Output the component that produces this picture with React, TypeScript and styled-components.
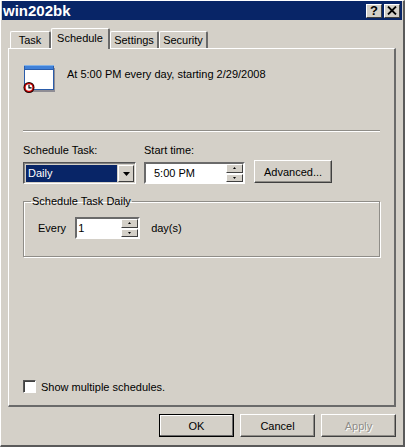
import React from 'react'
import styled, { createGlobalStyle } from 'styled-components'

const Global = createGlobalStyle`
  html, body { margin: 0; padding: 0; background: #d4d0c8; }
  * { box-sizing: border-box; }
`

const Dialog = styled.div`
  width: 405px;
  height: 447px;
  padding: 0 1px 2px 1px;
  background: #d4d0c8;
  display: flex;
  flex-direction: column;
  font-family: "Liberation Sans", Arial, sans-serif;
  font-size: 11px;
  color: #000;
  border-top: 1px solid #fff;
  border-left: 1px solid #fff;
  border-right: 2px solid #5a5a5a;
  border-bottom: 2px solid #5a5a5a;
`

const TitleBar = styled.div`
  height: 19px;
  flex: none;
  background: #082567;
  color: #fff;
  font-weight: bold;
  font-size: 15px;
  display: flex;
  align-items: center;
  justify-content: space-between;
  padding: 0 2px 0 1px;
`

const TitleButtons = styled.div`
  display: flex;
  gap: 2px;
`

const TitleButton = styled.div`
  width: 16px;
  height: 14px;
  background: #d4d0c8;
  color: #000;
  font-size: 13px;
  font-weight: bold;
  display: flex;
  align-items: center;
  justify-content: center;
  border: 1px solid;
  border-color: #fff #404040 #404040 #fff;
`

const Body = styled.div`
  flex: 1;
  display: flex;
  flex-direction: column;
  padding: 8px 6px 0 6px;
`

const TabRow = styled.div`
  display: flex;
  align-items: flex-end;
  height: 20px;
  padding-left: 2px;
  position: relative;
  z-index: 1;
`

const Tab = styled.div<{ $active?: boolean; $width: number }>`
  width: ${p => p.$width}px;
  height: ${p => (p.$active ? 21 : 17)}px;
  margin-bottom: ${p => (p.$active ? -1 : 0)}px;
  background: #d4d0c8;
  border-top: 1px solid #fff;
  border-left: 1px solid #fff;
  border-right: 2px solid #6a6a6a;
  border-radius: 2px 2px 0 0;
  display: flex;
  align-items: center;
  justify-content: center;
  padding-bottom: ${p => (p.$active ? 2 : 0)}px;
`

const Panel = styled.div`
  height: 359px;
  flex: none;
  border-top: 1px solid #fff;
  border-left: 1px solid #fff;
  border-right: 2px solid #6a6a6a;
  border-bottom: 2px solid #6a6a6a;
  padding: 16px 14px 0 14px;
  display: flex;
  flex-direction: column;
`

const Summary = styled.div`
  display: flex;
  align-items: flex-start;
  gap: 12px;
  height: 29px;
`

const SummaryText = styled.div`
  line-height: 13px;
  margin-top: 3px;
`

const Divider = styled.div`
  height: 2px;
  margin-top: 36px;
  background: #8f8d88;
  border-bottom: 1px solid #fff;
`

const Controls = styled.div`
  display: flex;
  align-items: flex-end;
  margin-top: 12px;
`

const Field = styled.div<{ $width: number }>`
  width: ${p => p.$width}px;
  display: flex;
  flex-direction: column;
  gap: 6px;
`

const Combo = styled.div`
  width: 113px;
  height: 22px;
  background: #d4d0c8;
  border: 1px solid;
  border-color: #555 #fff #fff #555;
  box-shadow: inset 1px 1px 0 #808080;
  padding: 2px 1px 1px 2px;
  display: flex;
  gap: 1px;
`

const ComboValue = styled.div`
  flex: 1;
  background: #082567;
  color: #fff;
  padding-left: 2px;
  line-height: 16px;
`

const ComboArrow = styled.div`
  width: 16px;
  background: #d4d0c8;
  border: 1px solid;
  border-color: #fff #404040 #404040 #fff;
  display: flex;
  align-items: center;
  justify-content: center;
`

const SpinInput = styled.div<{ $width: number; $indent: number }>`
  width: ${p => p.$width}px;
  height: 22px;
  background: #fff;
  border: 2px solid;
  border-color: #6a6a6a #fff #fff #6a6a6a;
  display: flex;
  align-items: center;
  justify-content: space-between;
  padding-left: ${p => p.$indent}px;
`

const SpinButtons = styled.div`
  width: 17px;
  height: 100%;
  display: flex;
  flex-direction: column;
  gap: 1px;
  flex: none;
`

const SpinButton = styled.div`
  flex: 1;
  background: #d4d0c8;
  border: 1px solid;
  border-color: #fff #404040 #404040 #fff;
  display: flex;
  align-items: center;
  justify-content: center;
`

const Button = styled.div<{ $default?: boolean; $disabled?: boolean; $width: number }>`
  width: ${p => p.$width}px;
  height: 23px;
  background: #d4d0c8;
  display: flex;
  align-items: center;
  justify-content: center;
  color: ${p => (p.$disabled ? '#8f8d88' : '#000')};
  text-shadow: ${p => (p.$disabled ? '1px 1px 0 #fff' : 'none')};
  border: 1px solid;
  border-color: ${p => (p.$default ? '#000' : '#fff #404040 #404040 #fff')};
  box-shadow: ${p => (p.$default ? 'inset -1px -1px 0 #6a6a6a, inset 1px 1px 0 #fff' : 'inset -1px -1px 0 #8f8d88')};
`

const AdvancedSlot = styled.div`
  margin-left: 9px;
  margin-bottom: 1px;
`

const Group = styled.fieldset`
  margin: 11px 0 0 0;
  padding: 9px 0 0 14px;
  height: 62px;
  border: 1px solid #8f8d88;
  box-shadow: inset 1px 1px 0 #fff, 1px 1px 0 #fff;
  display: block;
`

const GroupTitle = styled.legend`
  padding: 0 1px;
  margin-left: -7px;
  line-height: 13px;
`

const EveryRow = styled.div`
  display: flex;
  align-items: center;
  gap: 9px;
`

const DayLabel = styled.span`
  margin-left: 2px;
`

const Spacer = styled.div`
  flex: 1;
`

const CheckRow = styled.div`
  display: flex;
  align-items: center;
  gap: 5px;
  margin-bottom: 12px;
`

const CheckBox = styled.div`
  width: 13px;
  height: 13px;
  background: #fff;
  border: 1px solid;
  border-color: #555 #fff #fff #555;
  box-shadow: inset 1px 1px 0 #404040;
`

const Footer = styled.div`
  display: flex;
  justify-content: flex-end;
  gap: 6px;
  margin-top: 7px;
`

const TaskIcon = () => (
  <svg width="32" height="29" viewBox="0 0 32 29">
    <rect x="4" y="3" width="28" height="24" fill="#8f8d94" />
    <rect x="1" y="0" width="30" height="25" fill="#2a5caa" />
    <rect x="1" y="0" width="30" height="1" fill="#7fb0e8" />
    <rect x="2" y="1" width="28" height="3" fill="#3f80d8" />
    <rect x="2" y="5" width="28" height="19" fill="#fff" />
    <circle cx="6" cy="22.5" r="5.5" fill="#200000" />
    <circle cx="6" cy="22.5" r="4.6" fill="#d00000" />
    <circle cx="6" cy="22.5" r="3.3" fill="#fff" />
    <path d="M6 19.8v3h2.6" fill="none" stroke="#000" strokeWidth="1.2" />
  </svg>
)

const CloseGlyph = () => (
  <svg width="10" height="9" viewBox="0 0 10 9">
    <path d="M1 0.5l8 8M9 0.5l-8 8" stroke="#000" strokeWidth="1.8" fill="none" />
  </svg>
)

const Arrow = ({ down, size }: { down: boolean; size: number }) => (
  <svg width={size * 2 - 1} height={size} viewBox={`0 0 ${size * 2 - 1} ${size}`}>
    <path
      d={down ? `M0 0h${size * 2 - 1}L${size - 0.5} ${size}z` : `M0 ${size}h${size * 2 - 1}L${size - 0.5} 0z`}
      fill="#000"
    />
  </svg>
)

const Spinner = () => (
  <SpinButtons>
    <SpinButton><Arrow down={false} size={2} /></SpinButton>
    <SpinButton><Arrow down size={2} /></SpinButton>
  </SpinButtons>
)

export default function App() {
  return (
    <>
      <Global />
      <Dialog>
        <TitleBar>
          win202bk
          <TitleButtons>
            <TitleButton>?</TitleButton>
            <TitleButton><CloseGlyph /></TitleButton>
          </TitleButtons>
        </TitleBar>
        <Body>
          <TabRow>
            <Tab $width={41}>Task</Tab>
            <Tab $active $width={59}>Schedule</Tab>
            <Tab $width={49}>Settings</Tab>
            <Tab $width={49}>Security</Tab>
          </TabRow>
          <Panel>
            <Summary>
              <TaskIcon />
              <SummaryText>At 5:00 PM every day, starting 2/29/2008</SummaryText>
            </Summary>
            <Divider />
            <Controls>
              <Field $width={121}>
                Schedule Task:
                <Combo>
                  <ComboValue>Daily</ComboValue>
                  <ComboArrow><Arrow down size={4} /></ComboArrow>
                </Combo>
              </Field>
              <Field $width={101}>
                Start time:
                <SpinInput $width={101} $indent={8}>
                  5:00 PM
                  <Spinner />
                </SpinInput>
              </Field>
              <AdvancedSlot>
                <Button $width={78}>Advanced...</Button>
              </AdvancedSlot>
            </Controls>
            <Group>
              <GroupTitle>Schedule Task Daily</GroupTitle>
              <EveryRow>
                Every
                <SpinInput $width={65} $indent={1}>
                  1
                  <Spinner />
                </SpinInput>
                <DayLabel>day(s)</DayLabel>
              </EveryRow>
            </Group>
            <Spacer />
            <CheckRow>
              <CheckBox />
              Show multiple schedules.
            </CheckRow>
          </Panel>
          <Footer>
            <Button $default $width={75}>OK</Button>
            <Button $width={75}>Cancel</Button>
            <Button $disabled $width={75}>Apply</Button>
          </Footer>
        </Body>
      </Dialog>
    </>
  )
}
